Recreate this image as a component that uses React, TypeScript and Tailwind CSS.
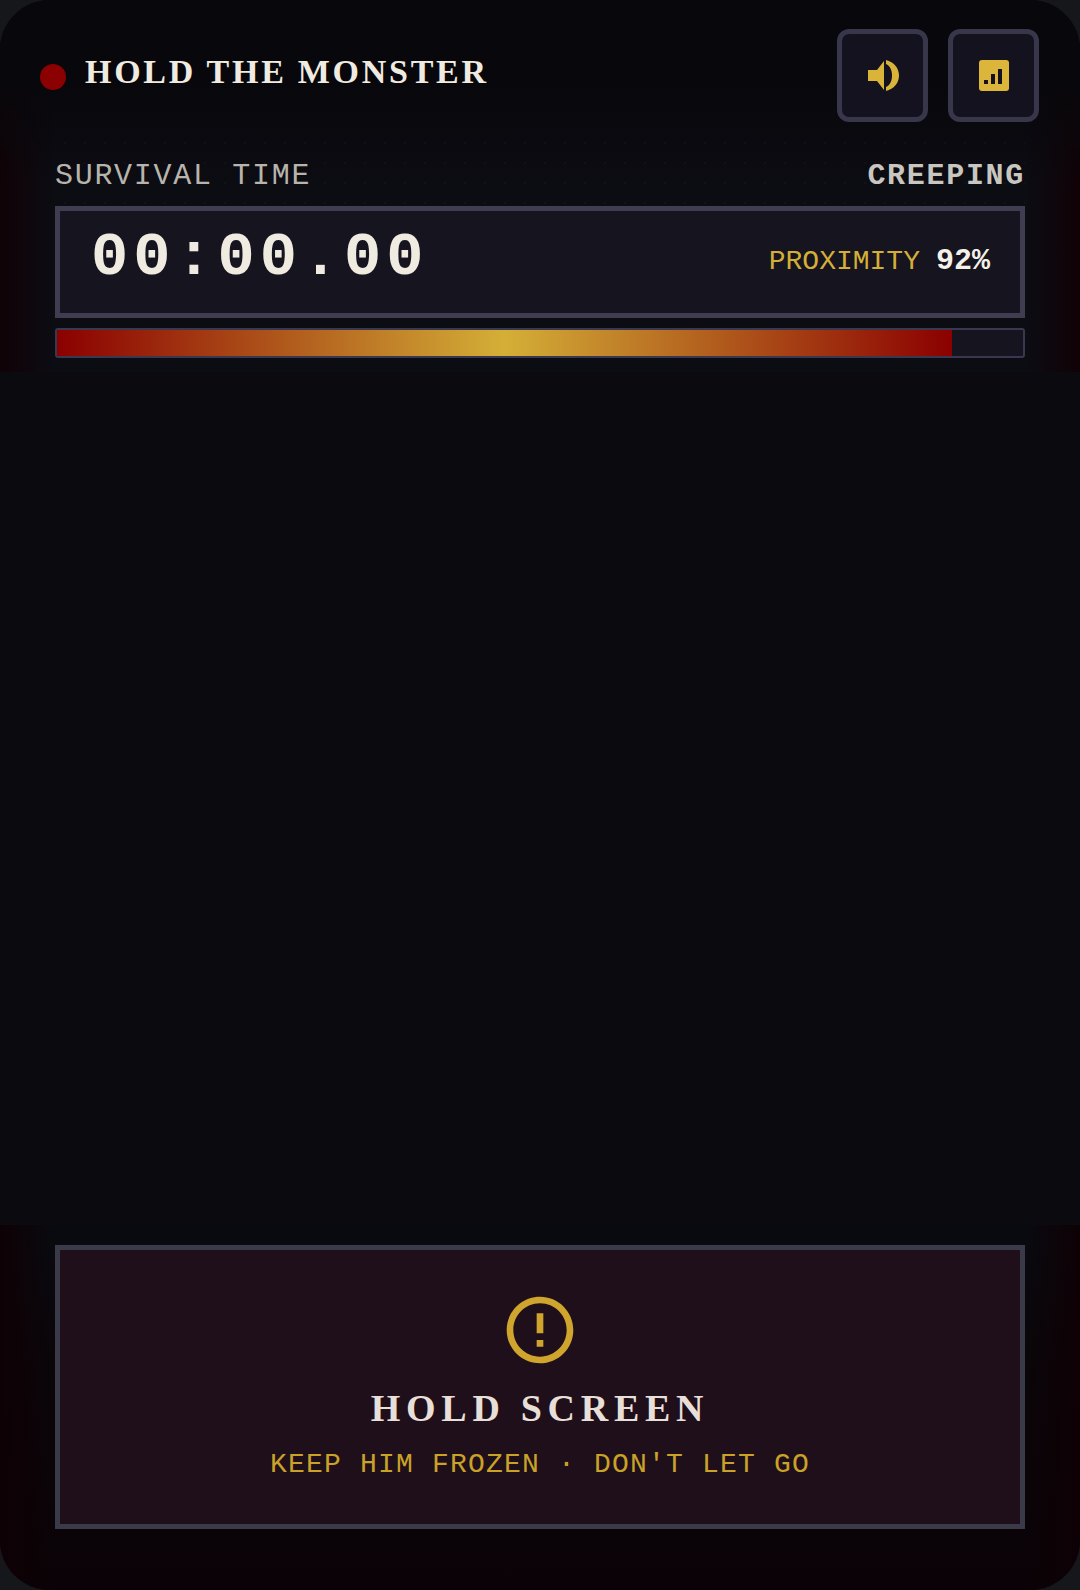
const serif = "font-['Liberation_Serif',serif]";

const SpeakerIcon = () => (
  <svg viewBox="0 0 32 31" className="w-[32px] h-[31px]" fill="#d9b438">
    <path d="M1 10h9l7-9v29l-7-9H1z" />
    <path d="M19 0c8 2 13 8 13 15.500S27 29 19 31v-4c4-2 6-6 6-11.500S23 6 19 4z" />
  </svg>
);

const StatsIcon = () => (
  <svg viewBox="0 0 30 31" className="w-[30px] h-[31px]">
    <rect width="30" height="31" rx="3" fill="#dcb63a" />
    <rect x="5" y="20" width="4" height="4" fill="#14121e" />
    <rect x="12" y="14" width="4" height="10" fill="#14121e" />
    <rect x="19" y="9" width="4" height="15" fill="#14121e" />
  </svg>
);

const AlertIcon = () => (
  <svg viewBox="0 0 24 24" className="w-[80px] h-[80px]" fill="#cfa52e">
    <path d="M11 15h2v2h-2zm0-8h2v6h-2zm.99-5C6.47 2 2 6.48 2 12s4.47 10 9.99 10C17.52 22 22 17.52 22 12S17.52 2 11.99 2zM12 20c-4.42 0-8-3.58-8-8s3.58-8 8-8 8 3.58 8 8-3.58 8-8 8z" />
  </svg>
);

const IconButton = ({ children, label }: { children: React.ReactNode; label: string }) => (
  <button
    type="button"
    aria-label={label}
    className="w-[91px] h-[93px] shrink-0 flex items-center justify-center rounded-[12px] border-[5px] border-[#38364a] bg-[#14121e]"
  >
    {children}
  </button>
);

export default function App() {
  return (
    <div className="w-[1080px] h-[1590px] bg-[#15171a] overflow-hidden font-['Liberation_Mono',monospace]">
      <div className="relative w-full h-full rounded-[50px] overflow-hidden bg-[#0a0a0f] flex flex-col">
        {/* Top section */}
        <div className="h-[372px] shrink-0 bg-[linear-gradient(90deg,#100206_0%,#0c0c13_5%,#0c0c13_95%,#100206_100%)]">
          <div className="h-full bg-[linear-gradient(180deg,#08070b_0%,#08070b_22%,transparent_50%)] px-[55px]">
            <header className="h-[133px] flex items-start justify-between -ml-[15px] -mr-[14px]">
              <div className="flex items-center gap-[19px] pt-[51px]">
                <span className="mt-[10px] w-[26px] h-[26px] rounded-full bg-[#8b0000]" />
                <h1 className={`${serif} text-[34px] leading-[42px] font-bold tracking-[0.08em] text-[#f0ebe0]`}>
                  HOLD THE MONSTER
                </h1>
              </div>
              <div className="flex gap-[20px] pt-[29px]">
                <IconButton label="Sound">
                  <SpeakerIcon />
                </IconButton>
                <IconButton label="Stats">
                  <StatsIcon />
                </IconButton>
              </div>
            </header>

            <div className="flex items-center justify-between h-[73px] pt-[14px] bg-[radial-gradient(rgba(255,255,255,0.025)_1px,transparent_1.5px)] bg-[size:20px_20px]">
              <span className="text-[30px] tracking-[1.7px] text-[#b8b4ac]">SURVIVAL TIME</span>
              <span className="text-[30px] font-bold tracking-[1.7px] text-[#c9c6c0]">CREEPING</span>
            </div>

            <div className="h-[112px] flex items-center justify-between border-[5px] border-[#3f3d4f] bg-[#16141f] pl-[31px] pr-[30px]">
              <span className="text-[62px] leading-none font-bold tracking-[0.08em] text-[#f0ebe0] -mt-[8px]">
                00:00.00
              </span>
              <div className="flex items-baseline gap-[16px] -mt-[2px]">
                <span className="text-[28px] text-[#d4af37]">PROXIMITY</span>
                <span className="text-[30px] font-bold text-[#f5f0e8]">92%</span>
              </div>
            </div>

            <div className="mt-[10px] h-[30px] border-2 border-[#3a3850] rounded-[3px] bg-[#16141f] overflow-hidden">
              <div className="h-full w-[92.6%] bg-[linear-gradient(90deg,#8b0000_0%,#d4af37_50%,#8b0000_100%)]" />
            </div>
          </div>
        </div>

        {/* Empty play field */}
        <div className="flex-1 bg-[#0a0a0f]" />

        {/* Hold zone */}
        <div className="h-[365px] shrink-0 bg-[linear-gradient(180deg,#090a10_0%,#0a0509_40%,#0a0206_100%)]">
          <div className="h-full px-[55px] pt-[20px] bg-[linear-gradient(90deg,#0e0105_0%,transparent_5%,transparent_95%,#0e0105_100%)]">
            <div className="h-[284px] flex flex-col items-center border-[5px] border-[#3a3a48] bg-[#1f0f1a] pt-[40px]">
              <AlertIcon />
              <h2 className={`${serif} mt-[15px] text-[38px] leading-[46px] font-bold tracking-[0.15em] text-[#e8dfd8]`}>
                HOLD SCREEN
              </h2>
              <p className="mt-[16px] text-[28px] leading-[36px] tracking-[1.2px] text-[#c9a227]">
                KEEP HIM FROZEN · DON'T LET GO
              </p>
            </div>
          </div>
        </div>
      </div>
    </div>
  );
}
